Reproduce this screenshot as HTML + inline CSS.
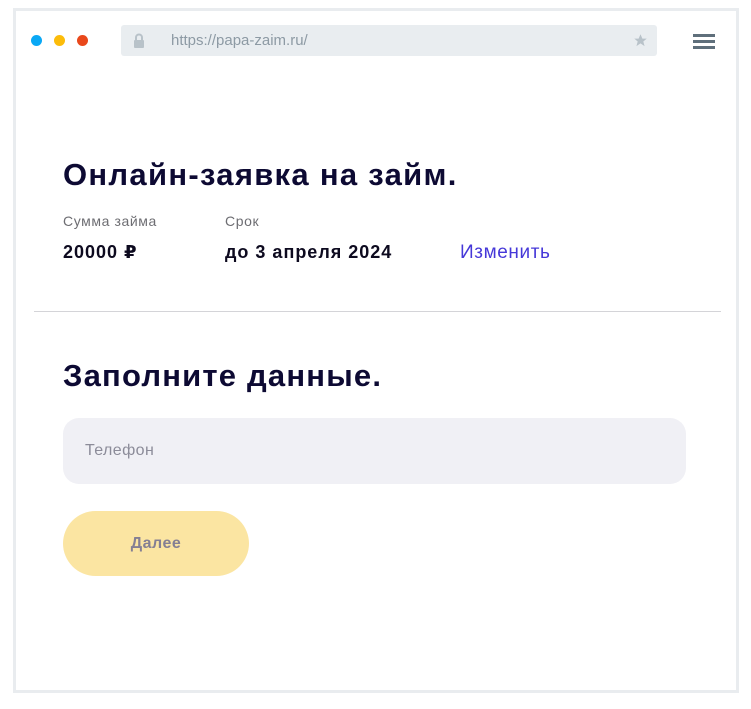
<!DOCTYPE html>
<html><head><meta charset="utf-8"><style>
*{margin:0;padding:0;box-sizing:border-box}
body{width:751px;height:709px;background:#fff;font-family:"Liberation Sans","DejaVu Sans",sans-serif;position:relative;overflow:hidden}
.frame{position:absolute;left:13px;top:8px;width:726px;height:685px;border:3px solid #e9ecef;background:#fff}
.dot{position:absolute;top:35px;width:11px;height:11px;border-radius:50%}
.url{position:absolute;left:121px;top:25px;width:536px;height:31px;background:#e9edf0;border-radius:3px}
.url span{position:absolute;left:50px;top:7px;font-size:15px;color:#8d9aa4}
.burger{position:absolute;left:693px;width:22px;height:3px;background:#5f6f7b}
h1,h2{position:absolute;left:63px;font-size:31px;font-weight:bold;color:#0d0a33}
h1{letter-spacing:1.3px}
h2{letter-spacing:1.2px}
.lab{position:absolute;top:213px;font-size:14px;color:#6d6d72;letter-spacing:0.6px}
.val{position:absolute;top:242px;font-size:18px;font-weight:bold;color:#0d0a1f;letter-spacing:1px}
</style></head><body>
<div class="frame"></div>
<div class="dot" style="left:31px;background:#0aa8f5"></div>
<div class="dot" style="left:54px;background:#fcbc0a"></div>
<div class="dot" style="left:77px;background:#e9481b"></div>
<div class="url">
<svg style="position:absolute;left:12px;top:8px" width="12" height="15" viewBox="0 0 12 15"><path d="M3 7V4.5a3 3 0 0 1 6 0V7" stroke="#b8c2c9" stroke-width="2" fill="none"/><rect x="1" y="7" width="10" height="8" rx="1" fill="#b8c2c9"/></svg>
<span>https://papa-zaim.ru/</span>
<svg style="position:absolute;left:512px;top:8px" width="15" height="15" viewBox="0 0 24 24"><path d="M12 2l3 7h7l-5.5 4.5 2 7.5L12 16.5 5.5 21l2-7.5L2 9h7z" fill="#b8c2c9"/></svg>
</div>
<div class="burger" style="top:34px"></div>
<div class="burger" style="top:40px"></div>
<div class="burger" style="top:46px"></div>
<h1 style="top:157px">Онлайн-заявка на займ.</h1>
<div class="lab" style="left:63px">Сумма займа</div>
<div class="lab" style="left:225px">Срок</div>
<div class="val" style="left:63px">20000 ₽</div>
<div class="val" style="left:225px">до 3 апреля 2024</div>
<div style="position:absolute;left:460px;top:242px;font-size:19px;color:#4638d8;letter-spacing:0.6px">Изменить</div>
<div style="position:absolute;left:34px;top:311px;width:687px;height:1px;background:#d4d4d8"></div>
<h2 style="top:358px">Заполните данные.</h2>
<div style="position:absolute;left:63px;top:418px;width:623px;height:66px;background:#f0f0f5;border-radius:16px"><span style="position:absolute;left:22px;top:24px;font-size:16px;color:#8c8c99;letter-spacing:0.4px">Телефон</span></div>
<div style="position:absolute;left:63px;top:511px;width:186px;height:65px;background:#fbe5a2;border-radius:33px;text-align:center;line-height:65px;font-size:16px;font-weight:bold;color:#847f93;letter-spacing:0.5px">Далее</div>
</body></html>
